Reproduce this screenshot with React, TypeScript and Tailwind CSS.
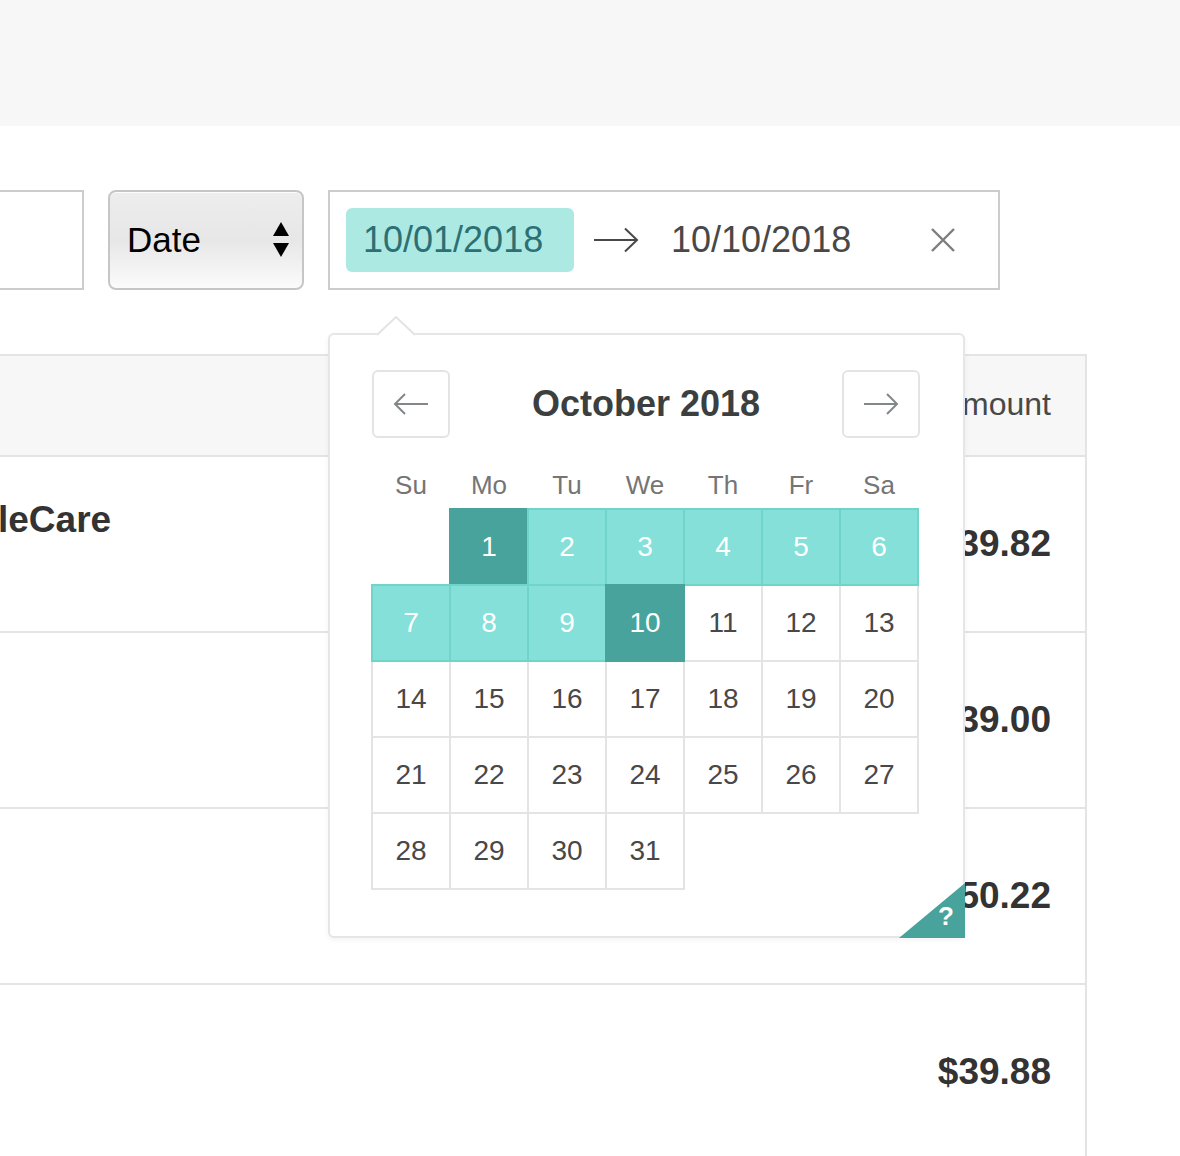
const font = { fontFamily: '"Liberation Sans", Arial, sans-serif' };

const days = ['Su', 'Mo', 'Tu', 'We', 'Th', 'Fr', 'Sa'];
const rows = [
  { amount: '$39.82', name: 'leCare' },
  { amount: '$39.00' },
  { amount: '$50.22' },
  { amount: '$39.88' },
];

function ArrowRight({ className }: { className?: string }) {
  return (
    <svg width="46" height="26" viewBox="0 0 46 26" className={className} fill="none" stroke="currentColor" strokeWidth="2">
      <path d="M1 13H44" />
      <path d="M32 1.5L44 13L32 24.5" />
    </svg>
  );
}

function ArrowLeft({ className }: { className?: string }) {
  return (
    <svg width="36" height="22" viewBox="0 0 36 22" className={className} fill="none" stroke="currentColor" strokeWidth="2">
      <path d="M35 11H2" />
      <path d="M12 1L2 11L12 21" />
    </svg>
  );
}

function Cell({ day }: { day: number | null }) {
  if (day === null) return <div />;
  const edge = day === 1 || day === 10;
  const span = day > 1 && day < 10;
  const tone = edge
    ? 'bg-[#47a39b] border-[#47a39b] text-white'
    : span
    ? 'bg-[#84e0d8] border-[#6fd5cb] text-white'
    : 'bg-white border-[#e4e4e4] text-[#484848]';
  return (
    <div className={`-m-px flex items-center justify-center border-2 text-[28px] ${tone} ${edge || span ? 'relative z-10' : ''}`}>
      {day}
    </div>
  );
}

function Calendar() {
  const cells: (number | null)[] = [null];
  for (let d = 1; d <= 31; d++) cells.push(d);
  return (
    <div className="absolute left-[328px] top-[333px] h-[605px] w-[637px] rounded-[6px] border-2 border-[#e6e6e6] bg-white px-[42px] pt-[35px] shadow-[0_2px_6px_rgba(0,0,0,0.05)]">
      <svg width="38" height="20" viewBox="0 0 38 20" className="absolute left-[47px] top-[-19px]">
        <polygon points="0,20 19,1 38,20" fill="white" />
        <polyline points="0,19 19,1 38,19" fill="none" stroke="#e4e4e4" strokeWidth="2" />
      </svg>
      <div className="flex h-[68px] w-[548px] items-center justify-between">
        <div className="flex h-[68px] w-[78px] items-center justify-center rounded-[6px] border-2 border-[#e4e4e4] text-[#82888a]">
          <ArrowLeft />
        </div>
        <div className="text-[36px] font-bold text-[#3c3f40]">October 2018</div>
        <div className="flex h-[68px] w-[78px] items-center justify-center rounded-[6px] border-2 border-[#e4e4e4] text-[#82888a]">
          <ArrowLeft className="rotate-180" />
        </div>
      </div>
      <div className="mt-[28px] mb-[7px] grid h-[36px] grid-cols-[repeat(7,78px)] items-center text-[26px] text-[#757575]">
        {days.map((d) => (
          <div key={d} className="text-center">{d}</div>
        ))}
      </div>
      <div className="grid grid-cols-[repeat(7,78px)] auto-rows-[76px]">
        {cells.map((d, i) => (
          <Cell key={i} day={d} />
        ))}
      </div>
      <div className="absolute bottom-[-2px] right-[-2px] h-[55px] w-[66px]">
        <svg width="66" height="55" viewBox="0 0 66 55" className="absolute inset-0">
          <polygon points="66,0 66,55 0,55" fill="#47a39b" />
        </svg>
        <span className="absolute bottom-[9px] right-[11px] text-[26px] font-bold leading-none text-white">?</span>
      </div>
    </div>
  );
}

export default function App() {
  return (
    <div className="relative min-h-[1160px] overflow-hidden bg-white" style={font}>
      <div className="h-[126px] bg-[#f7f7f7]" />

      <div className="mt-[64px] flex gap-[24px]">
        <div className="h-[100px] w-[84px] border-2 border-l-0 border-[#cccccc]" />
        <div className="flex h-[100px] w-[196px] items-center justify-between rounded-[8px] border-2 border-[#c6c6c6] bg-gradient-to-b from-[#ededed] via-[#e7e7e7] to-[#fbfbfb] pl-[17px] pr-[12px] shadow-[inset_0_1px_0_rgba(255,255,255,0.8)]">
          <span className="text-[35px] text-black">Date</span>
          <svg width="18" height="36" viewBox="0 0 18 36">
            <polygon points="9,0 17,14 1,14" fill="black" />
            <polygon points="1,21 17,21 9,35" fill="black" />
          </svg>
        </div>
        <div className="flex h-[100px] w-[672px] items-center border-2 border-[#cccccc] pl-[16px]">
          <div className="flex h-[64px] w-[228px] items-center rounded-[6px] bg-[#ade9e3] pl-[17px] text-[36px] text-[#2b7074]">
            10/01/2018
          </div>
          <ArrowRight className="ml-[19px] text-[#484848]" />
          <span className="ml-[32px] text-[36px] text-[#484848]">10/10/2018</span>
          <svg width="24" height="24" viewBox="0 0 24 24" className="ml-[80px]" fill="none" stroke="#7d7d7d" strokeWidth="2.4">
            <path d="M1 1L23 23M23 1L1 23" />
          </svg>
        </div>
      </div>

      <div className="mt-[64px] w-[1087px] border-r-2 border-t-2 border-[#e4e4e4]">
        <div className="flex h-[101px] items-center justify-end border-b-2 border-[#e4e4e4] bg-[#f7f7f7] pb-[4px] pr-[34px]">
          <span className="text-[32px] text-[#484848]">Amount</span>
        </div>
        {rows.map((r, i) => (
          <div key={i} className="flex h-[176px] justify-between border-b-2 border-[#e4e4e4] pr-[34px]">
            <div className="-ml-[2px] pt-[35px] text-[37px] font-bold text-[#333333]">{r.name ?? ''}</div>
            <div className="flex items-center text-[37px] font-bold text-[#333333]">{r.amount}</div>
          </div>
        ))}
      </div>

      <Calendar />
    </div>
  );
}
